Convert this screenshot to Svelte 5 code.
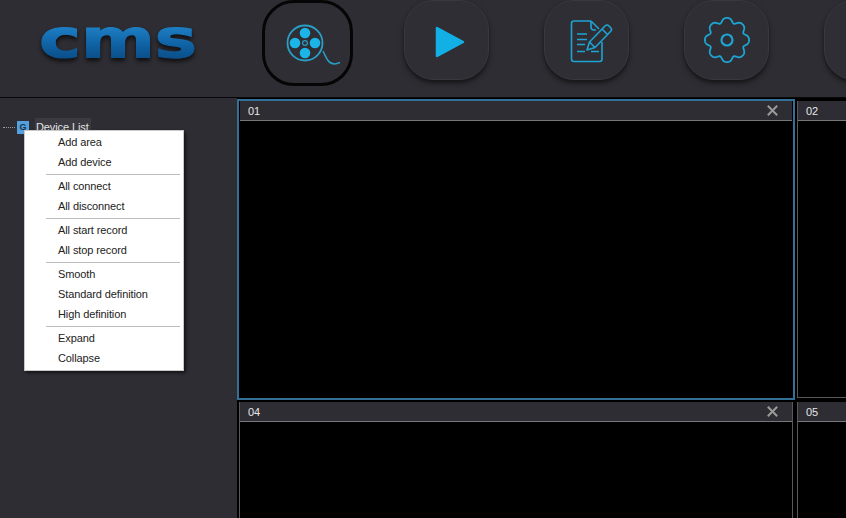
<script>
	const menuGroups = [
		['Add area', 'Add device'],
		['All connect', 'All disconnect'],
		['All start record', 'All stop record'],
		['Smooth', 'Standard definition', 'High definition'],
		['Expand', 'Collapse']
	];
	const cells = [
		{ id: '01', selected: true, closable: true },
		{ id: '02' },
		{ id: '04', closable: true },
		{ id: '05' }
	];

	// wavy outline of the settings gear: flat lobes, narrow valleys
	const gearPoints = Array.from({ length: 200 }, (_, i) => {
		const t = (i / 200) * Math.PI * 2;
		const r = 20.3 + 2.2 * (Math.cos(8 * t) - 0.2 * Math.cos(16 * t));
		return `${(24 + r * Math.sin(t)).toFixed(2)},${(24 - r * Math.cos(t)).toFixed(2)}`;
	}).join(' ');
</script>

<div class="app">
	<header class="topbar">
		<div class="logo">
			<svg width="164" height="72" viewBox="0 0 164 72">
				<defs>
					<linearGradient id="logoFill" gradientUnits="userSpaceOnUse" x1="0" y1="26" x2="0" y2="60">
						<stop offset="0" stop-color="#1f80c6" />
						<stop offset="0.55" stop-color="#0f62a4" />
						<stop offset="1" stop-color="#0a4c86" />
					</linearGradient>
				</defs>
				<text class="logo-text" x="3" y="57" textLength="158" lengthAdjust="spacingAndGlyphs" fill="url(#logoFill)" stroke="url(#logoFill)" stroke-width="1.2">cms</text>
			</svg>
		</div>
		<nav class="nav">
			<button class="nav-btn active" aria-label="Video">
				<svg width="60" height="52" viewBox="0 0 60 52">
					<circle cx="22" cy="22" r="17.5" fill="none" stroke="#2a9ec4" stroke-width="1.8" />
					<circle cx="22" cy="12" r="5.3" fill="#1bb5e8" />
					<circle cx="22" cy="32" r="5.3" fill="#1bb5e8" />
					<circle cx="12" cy="22" r="5.3" fill="#1bb5e8" />
					<circle cx="32" cy="22" r="5.3" fill="#1bb5e8" />
					<circle cx="22" cy="22" r="2.4" fill="none" stroke="#2a9ec4" stroke-width="1.2" />
					<path d="M40 30 C42 34 43 37 45 39.5 C48 43.5 52 43.8 57 41.5" fill="none" stroke="#2a9ec4" stroke-width="1.5" />
				</svg>
			</button>
			<button class="nav-btn play" aria-label="Playback">
				<svg width="30" height="32" viewBox="0 0 30 32">
					<path d="M2 2 L28 16 L2 30 Z" fill="#12b0e4" stroke="#12b0e4" stroke-width="2.5" stroke-linejoin="round" />
				</svg>
			</button>
			<button class="nav-btn doc" aria-label="Log">
				<svg width="44" height="46" viewBox="0 0 44 46" fill="none" stroke="#1fa3d1" stroke-width="1.6">
					<path d="M22 3 H5 Q2.5 3 2.5 5.5 V41 Q2.5 43.5 5 43.5 H30.5 Q33 43.5 33 41 V24" />
					<path d="M22 3 L30 11" />
					<path d="M22 3 V9 Q22 12 25 12 H27" />
					<path d="M8 16 H18 M8 21.5 H18 M8 26.5 H16 M8 33.5 H16 M22 33.5 H30" />
					<path d="M18 32 L20.5 24 L36 8 Q38 6 40 8 L41.5 9.5 Q43.5 11.5 41.5 13.5 L26 29.5 Z" stroke-linejoin="round" />
					<path d="M20.5 24 L26 29.5 M33 11 L38.5 16.5" />
				</svg>
			</button>
			<button class="nav-btn" aria-label="Settings">
				<svg width="48" height="48" viewBox="0 0 48 48" fill="none" stroke="#1fa3d1" stroke-width="1.8">
					<polygon points={gearPoints} stroke-linejoin="round" />
					<circle cx="24" cy="24" r="5.5" stroke-width="2.2" />
				</svg>
			</button>
			<button class="nav-btn" aria-label="More"></button>
		</nav>
	</header>

	<main class="body">
		<aside class="sidebar">
			<div class="tree-row">
				<span class="dots"></span>
				<span class="tree-icon">G</span>
				<span class="tree-label">Device List</span>
			</div>
			<div class="menu">
				{#each menuGroups as group, i}
					{#if i > 0}<div class="sep"></div>{/if}
					{#each group as item}
						<div class="menu-item">{item}</div>
					{/each}
				{/each}
			</div>
		</aside>

		<section class="grid">
			{#each cells as cell}
				<div class="cell" class:selected={cell.selected}>
					<div class="cell-title">
						<span>{cell.id}</span>
						{#if cell.closable}
							<svg class="close" width="11" height="11" viewBox="0 0 11 11">
								<path d="M0.8 0.8 L10.2 10.2 M10.2 0.8 L0.8 10.2" stroke="#9a9a9a" stroke-width="2" />
							</svg>
						{/if}
					</div>
					<div class="cell-video"></div>
				</div>
			{/each}
		</section>
	</main>
</div>

<style>
	:global(body) {
		background: #2d2d33;
	}
	.app {
		width: 846px;
		height: 518px;
		overflow: hidden;
		display: flex;
		flex-direction: column;
		background: #2d2d33;
		font-family: 'Liberation Sans', Arial, sans-serif;
		font-size: 11px;
	}
	.topbar {
		height: 97px;
		flex: none;
		display: flex;
		border-bottom: 1px solid #08080a;
		box-sizing: content-box;
	}
	.logo {
		width: 262px;
		flex: none;
		padding-left: 36px;
		box-sizing: border-box;
	}
	.logo svg {
		display: block;
		filter: drop-shadow(0 3px 2px rgba(0, 0, 0, 0.65));
	}
	.logo-text {
		font-family: 'DejaVu Sans', sans-serif;
		font-weight: 700;
		font-size: 54px;
	}
	.nav {
		display: flex;
		align-items: flex-start;
		gap: 55px;
	}
	.nav-btn {
		width: 85px;
		height: 80px;
		flex: none;
		padding: 0;
		display: flex;
		align-items: center;
		justify-content: center;
		background: #2e2e34;
		border: 1px solid #38383e;
		border-radius: 30px;
		box-shadow: 0 3px 5px rgba(0, 0, 0, 0.55);
		box-sizing: border-box;
	}
	.nav-btn.active {
		width: 91px;
		height: 86px;
		margin-right: -4px;
		border: 3px solid #050506;
		box-shadow: none;
		border-radius: 32px;
	}
	.active svg {
		margin-left: 11px;
		margin-top: 7px;
	}
	.play svg {
		margin-left: 7px;
		margin-top: 3px;
	}
	.doc svg {
		margin-left: 9px;
		margin-top: 1px;
	}
	.body {
		flex: 1;
		min-height: 0;
		display: flex;
	}
	.sidebar {
		width: 237px;
		flex: none;
		position: relative;
		padding-top: 20px;
		box-sizing: border-box;
	}
	.tree-row {
		display: flex;
		align-items: center;
		height: 18px;
		padding-left: 3px;
	}
	.dots {
		width: 12px;
		border-top: 1px dotted #9a9a9a;
		margin-right: 2px;
	}
	.tree-icon {
		width: 12px;
		height: 13px;
		background: #549fdd;
		color: #17324a;
		font-size: 9px;
		font-weight: 700;
		line-height: 13px;
		text-align: center;
		margin-right: 6px;
	}
	.tree-label {
		background: #3a3a40;
		color: #e4e4e4;
		padding: 2px 2px 2px 1px;
		line-height: 14px;
		letter-spacing: -0.1px;
	}
	.menu {
		position: absolute;
		left: 24px;
		top: 32px;
		width: 160px;
		padding: 1px 0 2px;
		background: #fff;
		border: 1px solid #c8c8c8;
		box-sizing: border-box;
		box-shadow: 2px 2px 3px rgba(0, 0, 0, 0.55);
		color: #222;
		letter-spacing: -0.1px;
	}
	.menu-item {
		height: 20px;
		line-height: 20px;
		padding-left: 33px;
	}
	.sep {
		height: 1px;
		margin: 2px 3px 1px 21px;
		background: #bdbdbd;
	}
	.grid {
		flex: 1;
		min-width: 0;
		display: grid;
		grid-template-columns: 554px 554px;
		grid-auto-rows: 297px;
		gap: 4px;
		padding: 3px 0 0 2px;
		background: #000;
		overflow: hidden;
	}
	.cell {
		display: flex;
		flex-direction: column;
		border: 1px solid #58585c;
		border-top: 0;
		box-sizing: border-box;
		background: #000;
	}
	.cell.selected {
		border-color: transparent;
		outline: 2px solid #336f97;
	}
	.cell-title {
		height: 20px;
		flex: none;
		display: flex;
		align-items: center;
		justify-content: space-between;
		padding: 0 14px 0 8px;
		background: #2d2d33;
		border-bottom: 1px solid #77777c;
		box-sizing: border-box;
		color: #e6e6e6;
	}
	.cell-video {
		flex: 1;
		background: #000;
	}
</style>
